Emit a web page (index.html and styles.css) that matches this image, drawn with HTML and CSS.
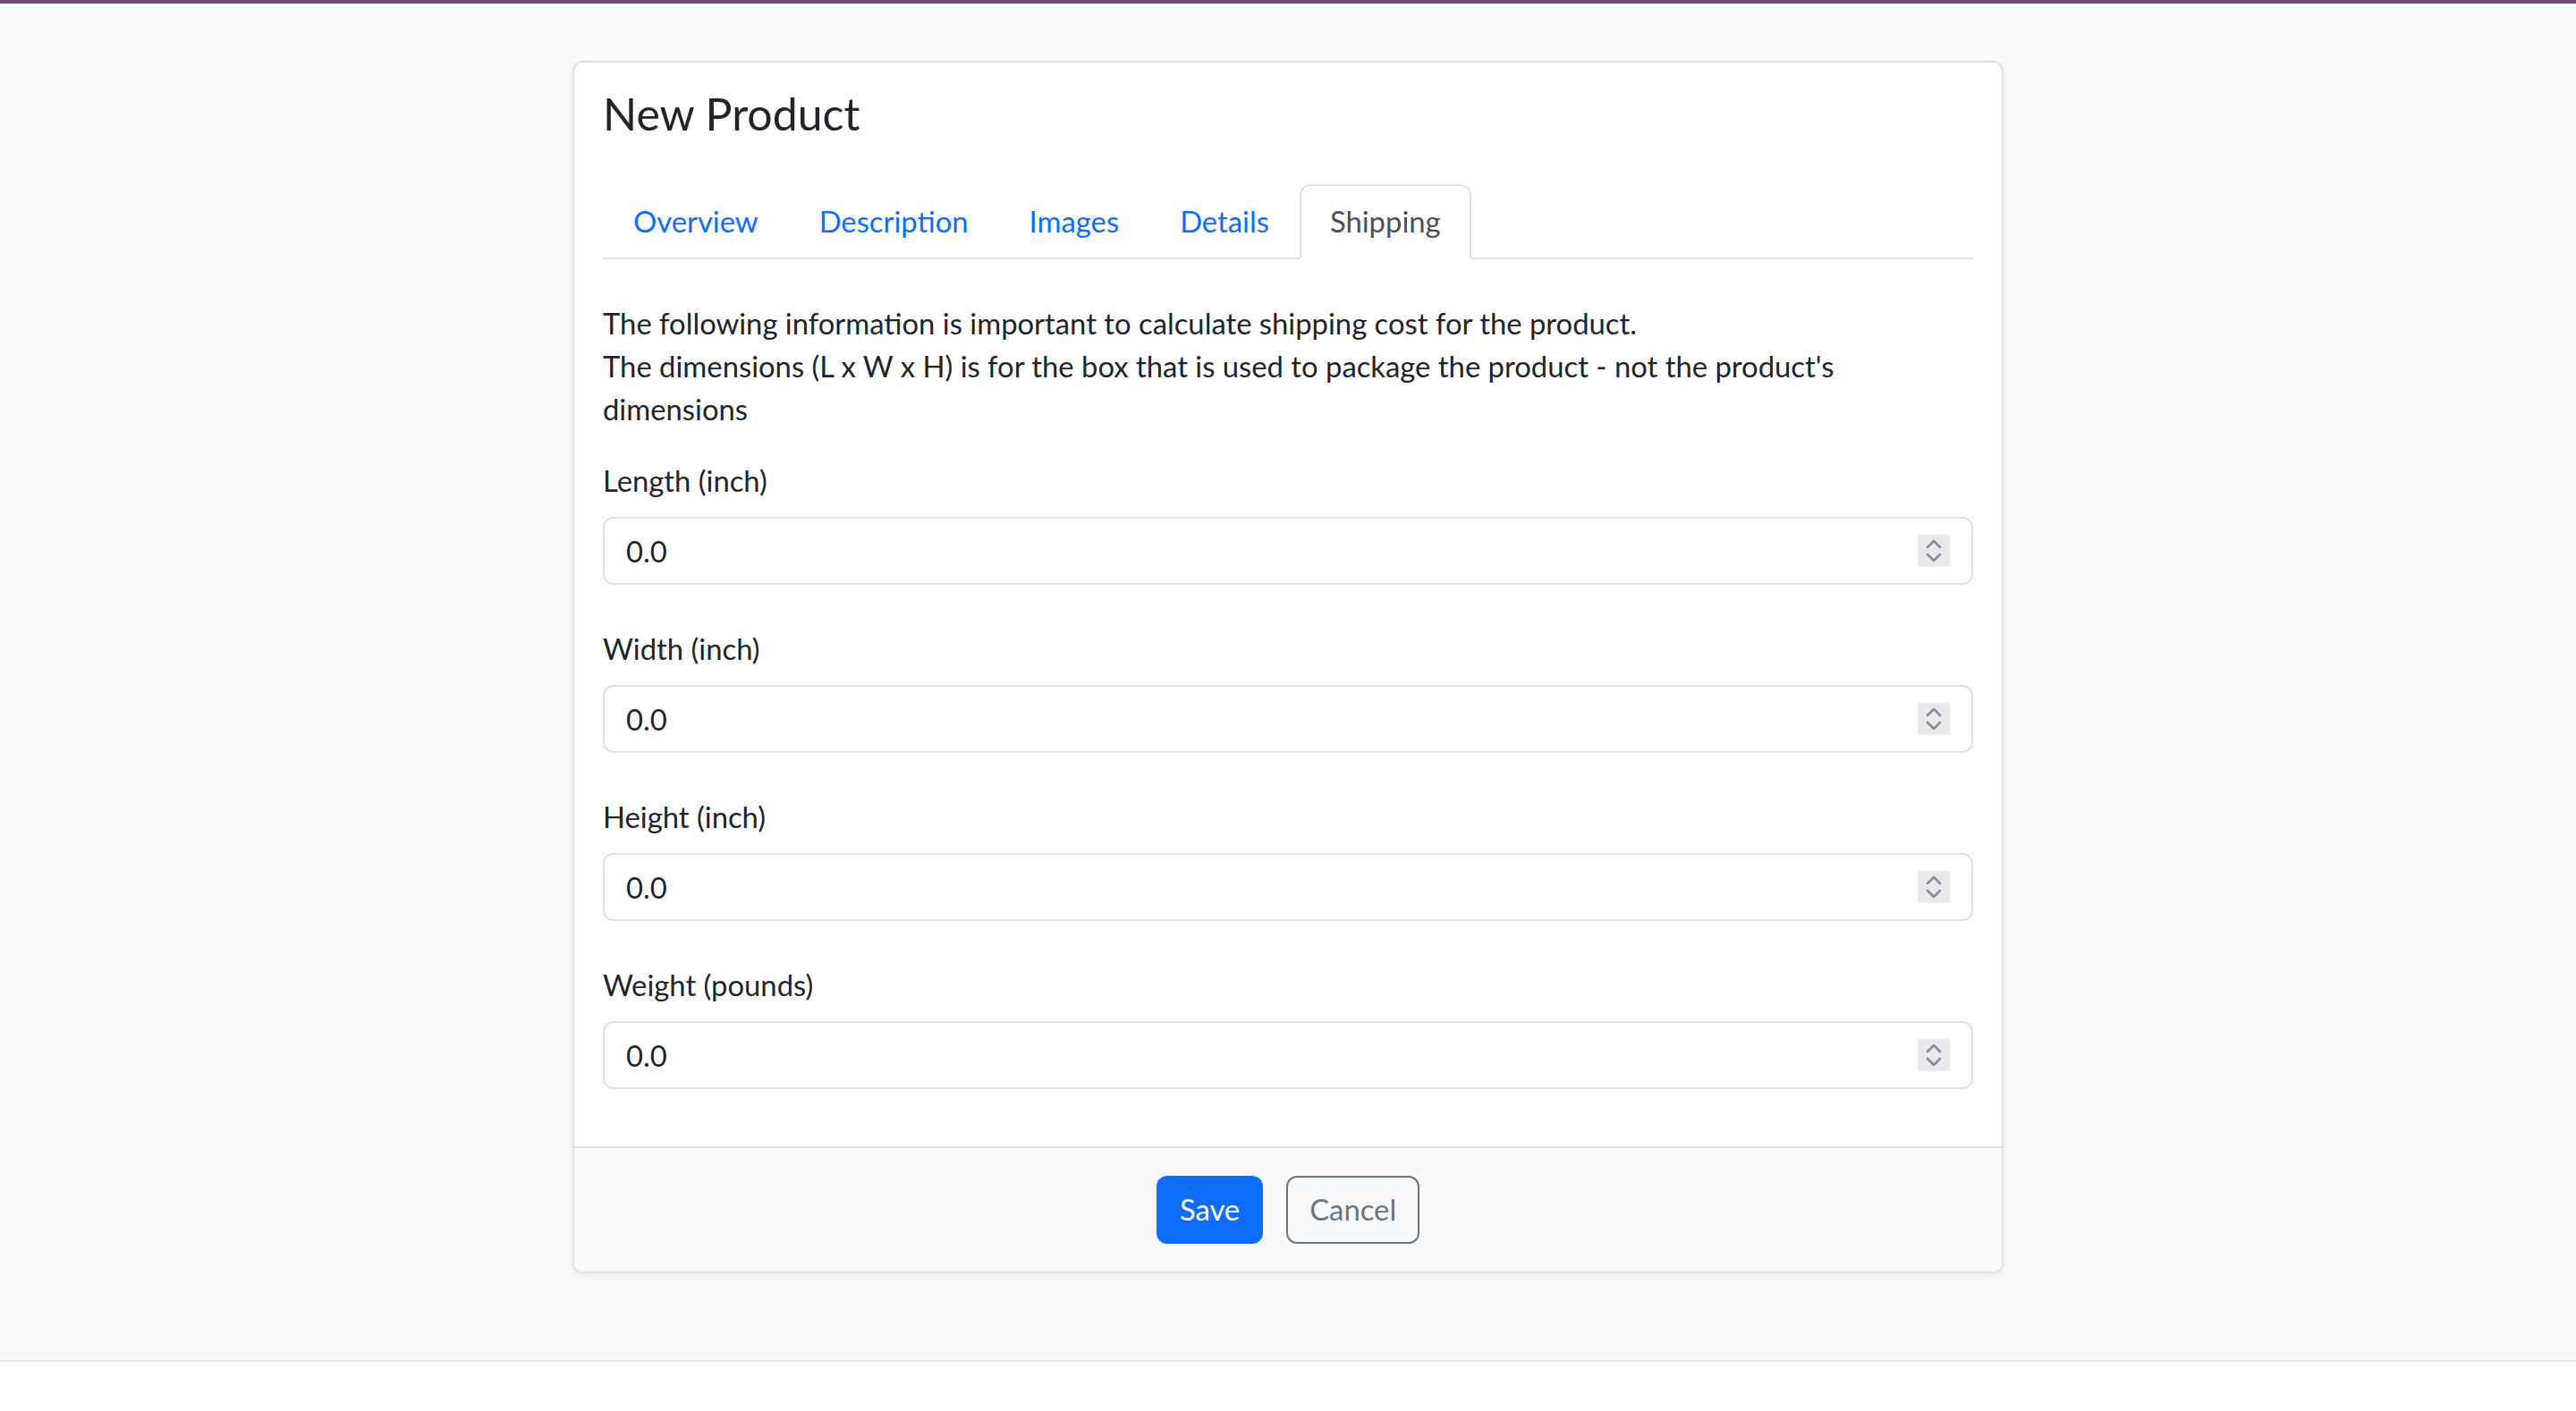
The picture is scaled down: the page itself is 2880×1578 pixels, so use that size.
FILE: index.html
```html
<!DOCTYPE html>
<html lang="en">
<head>
<meta charset="utf-8">
<title>New Product</title>
<link rel="stylesheet" href="styles.css">
</head>
<body>
<div class="topbar"></div>
<main class="page">
  <div class="card">
    <div class="card-body">
      <h3 class="card-title">New Product</h3>
      <ul class="nav-tabs">
        <li><a class="nav-link" href="#">Overview</a></li>
        <li><a class="nav-link" href="#">Description</a></li>
        <li><a class="nav-link" href="#">Images</a></li>
        <li><a class="nav-link" href="#">Details</a></li>
        <li><a class="nav-link active" href="#">Shipping</a></li>
      </ul>
      <div class="tab-pane">
        <p class="intro">The following information is important to calculate shipping cost for the product.<br>The dimensions (L x W x H) is for the box that is used to package the product - not the product's dimensions</p>
        <div class="form-group">
          <label class="form-label" for="len">Length (inch)</label>
          <div class="num-wrap">
            <input class="form-control" id="len" type="number" value="0.0" step="0.1">
            <span class="spinner"><svg viewBox="0 0 36 36" width="36" height="36"><path d="M11 14 L18 7 L25 14"/><path d="M11 22 L18 29 L25 22"/></svg></span>
          </div>
        </div>
        <div class="form-group">
          <label class="form-label" for="wid">Width (inch)</label>
          <div class="num-wrap">
            <input class="form-control" id="wid" type="number" value="0.0" step="0.1">
            <span class="spinner"><svg viewBox="0 0 36 36" width="36" height="36"><path d="M11 14 L18 7 L25 14"/><path d="M11 22 L18 29 L25 22"/></svg></span>
          </div>
        </div>
        <div class="form-group">
          <label class="form-label" for="hei">Height (inch)</label>
          <div class="num-wrap">
            <input class="form-control" id="hei" type="number" value="0.0" step="0.1">
            <span class="spinner"><svg viewBox="0 0 36 36" width="36" height="36"><path d="M11 14 L18 7 L25 14"/><path d="M11 22 L18 29 L25 22"/></svg></span>
          </div>
        </div>
        <div class="form-group last">
          <label class="form-label" for="wei">Weight (pounds)</label>
          <div class="num-wrap">
            <input class="form-control" id="wei" type="number" value="0.0" step="0.1">
            <span class="spinner"><svg viewBox="0 0 36 36" width="36" height="36"><path d="M11 14 L18 7 L25 14"/><path d="M11 22 L18 29 L25 22"/></svg></span>
          </div>
        </div>
      </div>
    </div>
    <div class="card-footer">
      <button class="btn btn-primary" type="button">Save</button>
      <button class="btn btn-outline" type="button">Cancel</button>
    </div>
  </div>
</main>
<footer class="bottom"></footer>
</body>
</html>
```

FILE: styles.css
```css
* { box-sizing: border-box; }
html { background: #ffffff; }
body {
  margin: 0;
  font-family: Lato, "Noto Sans", "Open Sans", sans-serif;
  font-size: 32.8px;
  line-height: 48px;
  color: #212529;
  background: #ffffff;
}
.topbar {
  height: 4px;
  background: #6e4b7a;
}
.page {
  background: #f8f9fa;
  height: 1519px;
  border-bottom: 2px solid #dee2e6;
  padding-top: 64px;
  display: flex;
  justify-content: center;
  align-items: flex-start;
}
.bottom { height: 55px; background: #ffffff; }
.card {
  width: 1600px;
  background: #ffffff;
  border: 2px solid #e0e1e3;
  border-radius: 12px;
  box-shadow: 0 4px 8px rgba(0, 0, 0, 0.06);
  overflow: hidden;
}
.card-body {
  padding: 26px 32px 32px;
}
.card-title {
  margin: 0 0 48px;
  font-size: 50px;
  line-height: 62px;
  font-weight: 400;
  color: #212529;
}
.nav-tabs {
  list-style: none;
  margin: 0;
  padding: 0;
  display: flex;
  border-bottom: 2px solid #dee2e6;
}
.nav-link {
  display: block;
  padding: 16px 32px;
  margin-bottom: -2px;
  border: 2px solid transparent;
  border-top-left-radius: 12px;
  border-top-right-radius: 12px;
  color: #0d6efd;
  text-decoration: none;
}
.nav-link.active {
  color: #495057;
  background: #ffffff;
  border-color: #dee2e6 #dee2e6 #ffffff;
}
.tab-pane { padding-top: 48px; }
.intro { margin: 0 0 32px; }
.form-group { margin-bottom: 48px; }
.form-group.last { margin-bottom: 32px; }
.form-label {
  display: block;
  margin-bottom: 16px;
}
.num-wrap { position: relative; }
.form-control {
  display: block;
  width: 100%;
  height: 76px;
  padding: 12px 24px;
  font-family: inherit;
  font-size: 32.8px;
  line-height: 48px;
  color: #212529;
  background: #ffffff;
  border: 2px solid #dee2e6;
  border-radius: 12px;
  outline: none;
  -moz-appearance: textfield;
  appearance: textfield;
}
.form-control::-webkit-inner-spin-button,
.form-control::-webkit-outer-spin-button {
  -webkit-appearance: none;
  margin: 0;
}
.spinner {
  position: absolute;
  right: 26px;
  top: 20px;
  width: 36px;
  height: 36px;
  background: #e9e9ed;
  display: block;
}
.spinner svg { display: block; }
.spinner path {
  fill: none;
  stroke: #8b8b93;
  stroke-width: 2.6;
  stroke-linecap: round;
  stroke-linejoin: round;
}
.card-footer {
  background: #f8f9fa;
  border-top: 2px solid #e0e1e3;
  padding: 31px 32px;
  display: flex;
  justify-content: center;
  gap: 26px;
}
.btn {
  height: 76px;
  padding: 12px 24px;
  font-family: inherit;
  font-size: 32.8px;
  line-height: 48px;
  border-radius: 12px;
  border: 2px solid transparent;
  cursor: pointer;
}
.btn-primary {
  background: #0d6efd;
  border-color: #0d6efd;
  color: #ffffff;
}
.btn-outline {
  background: transparent;
  border-color: #6c757d;
  color: #6c757d;
}
```
